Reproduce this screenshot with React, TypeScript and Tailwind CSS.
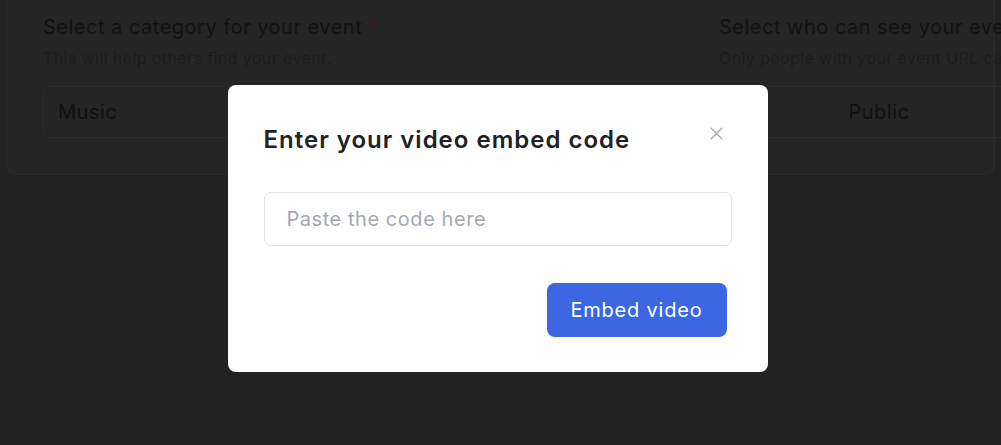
import { X } from "lucide-react";

const font = { fontFamily: "Inter, 'Noto Sans', sans-serif" };

function BackgroundForm() {
  return (
    <div className="mx-[6px] rounded-b-[10px] border border-t-0 border-[#2b2b2b] bg-[#252525] pb-[36px] pl-[36px]">
      <div className="grid grid-cols-[640px_1fr] gap-[36px] pt-[13px]">
        <div>
          <p className="text-[20px] leading-[28px] tracking-[0.5px] text-[#121212]">
            Select a category for your event <span className="text-[#3b1d1d]">*</span>
          </p>
          <p className="mt-[6px] text-[16px] leading-[22px] tracking-[0.4px] text-[#1c1c1c]">
            This will help others find your event.
          </p>
          <div className="mt-[17px] flex h-[52px] w-[600px] items-center rounded-[6px] border border-[#2c2c2c] px-[14px] text-[20px] tracking-[0.5px] text-[#111]">
            Music
          </div>
        </div>
        <div className="min-w-0">
          <p className="whitespace-nowrap text-[20px] leading-[28px] tracking-[0.5px] text-[#121212]">
            Select who can see your event
          </p>
          <p className="mt-[6px] whitespace-nowrap text-[16px] leading-[22px] tracking-[0.4px] text-[#1c1c1c]">
            Only people with your event URL can see it.
          </p>
          <div className="mt-[17px] flex h-[52px] w-[640px] rounded-[6px] border border-[#2c2c2c] text-[20px] tracking-[0.5px] text-[#111]">
            <div className="flex w-[318px] items-center justify-center">Public</div>
            <div className="flex flex-1 items-center justify-center border-l border-[#2c2c2c]">Private</div>
          </div>
        </div>
      </div>
    </div>
  );
}

function EmbedModal() {
  return (
    <div className="w-[540px] rounded-[8px] bg-white px-[36px] pb-[35px] pt-[39px]">
      <div className="flex items-start justify-between">
        <h2 className="text-[24px] font-semibold leading-[32px] tracking-[1px] text-[#222]">
          Enter your video embed code
        </h2>
        <button className="mr-[5px] mt-[-1px] text-[#a3a8b0]">
          <X size={21} strokeWidth={1.6} />
        </button>
      </div>
      <input
        className="mt-[36px] h-[54px] w-full rounded-[7px] border border-[#e1e3e7] px-[22px] text-[20px] tracking-[0.55px] text-[#222] outline-none placeholder:text-[#a4a9b1]"
        placeholder="Paste the code here"
      />
      <div className="mt-[37px] flex justify-end pr-[5px]">
        <button className="h-[54px] w-[180px] rounded-[8px] bg-[#3c66e2] text-[20px] tracking-[0.8px] text-white">
          Embed video
        </button>
      </div>
    </div>
  );
}

export default function App() {
  return (
    <div className="relative h-[445px] w-full overflow-hidden bg-[#222222]" style={font}>
      <BackgroundForm />
      <div className="absolute inset-0 flex items-start justify-center pr-[6px] pt-[85px]">
        <EmbedModal />
      </div>
    </div>
  );
}
